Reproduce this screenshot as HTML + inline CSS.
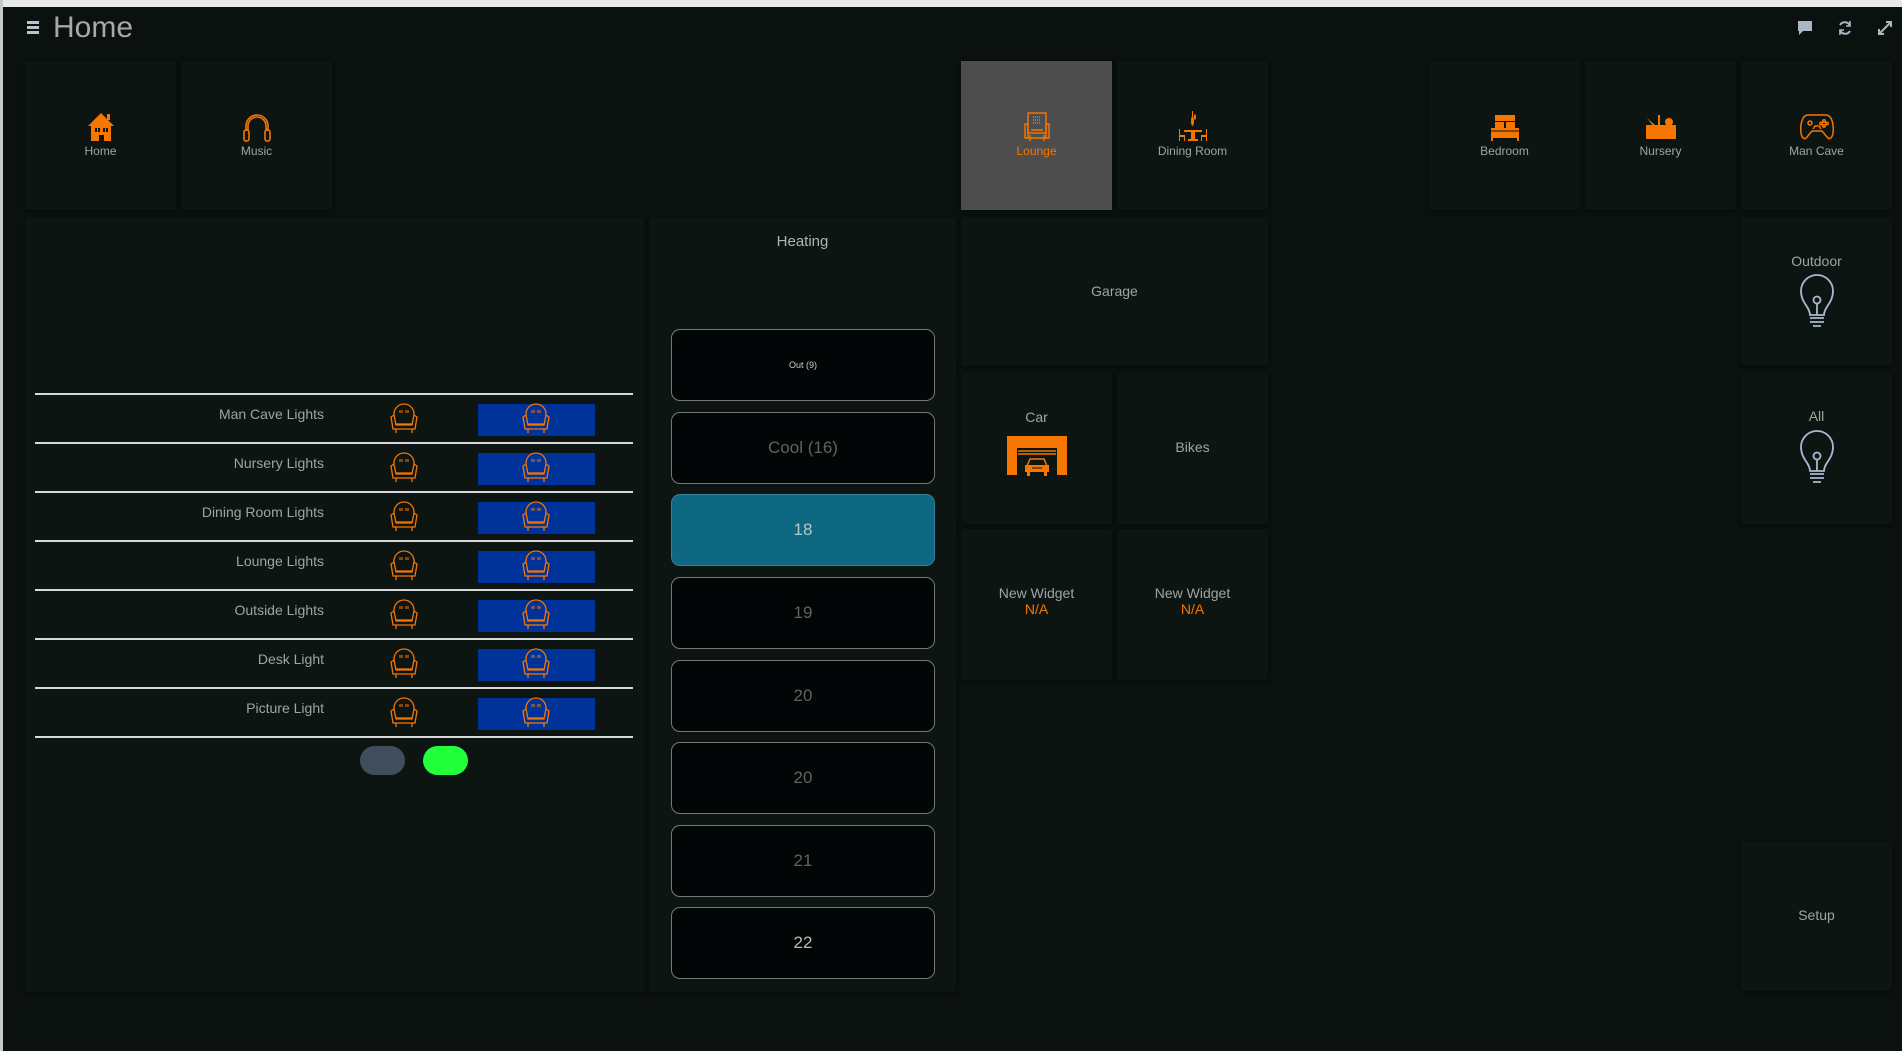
<!DOCTYPE html>
<html><head><meta charset="utf-8"><style>
*{margin:0;padding:0;box-sizing:border-box}
body{width:1902px;height:1051px;background:#0a110f;font-family:"Liberation Sans",sans-serif;position:relative;overflow:hidden;color:#a0a4a2}
#top{position:absolute;left:0;top:0;width:1902px;height:7px;background:#e8e8e6}
#left{position:absolute;left:0;top:0;width:3px;height:1051px;background:#c8c8c8}
.t{position:absolute;background:#0d1513;border-radius:3px;box-shadow:0 1px 3px rgba(0,0,0,.5)}
.lab{position:absolute;width:100%;text-align:center;font-size:12px;color:#a0a4a2}
.ic{position:absolute;left:50%;transform:translateX(-50%)}
.line{position:absolute;left:35px;width:598px;height:2px;background:#d8d8d8}
.rl{position:absolute;left:24px;width:300px;text-align:right;font-size:14px;color:#a0a4a2}
.blue{position:absolute;left:478px;width:117px;height:32px;background:#00339a}
.hb{position:absolute;left:671px;width:264px;height:72px;border:1px solid #777;border-radius:9px;background:#030606;text-align:center;line-height:70px;font-size:17px;color:#5f6462}
</style></head><body>
<div id="top"></div><div id="left"></div>
<div style="position:absolute;left:27px;top:21px;width:12px;">
<div style="height:3px;background:#b6c4d0;margin-bottom:2px"></div><div style="height:3px;background:#b6c4d0;margin-bottom:2px"></div><div style="height:3px;background:#b6c4d0"></div></div>
<div style="position:absolute;left:53px;top:11px;font-size:30px;color:#a8a8a8">Home</div>
<svg style="position:absolute;left:1797px;top:20px" width="16" height="16" viewBox="0 0 16 16"><path d="M1 1h14v10H6l-4 4v-4H1z" fill="#aab8c6"/></svg>
<svg style="position:absolute;left:1837px;top:20px" width="16" height="16" viewBox="0 0 16 16" fill="none" stroke="#aab8c6" stroke-width="2"><path d="M13 6A5.5 5.5 0 0 0 3 5"/><path d="M3 10a5.5 5.5 0 0 0 10 1"/><path d="M13 1v5H9M3 15v-5h4" stroke-width="1.6"/></svg>
<svg style="position:absolute;left:1877px;top:20px" width="16" height="16" viewBox="0 0 16 16" fill="none" stroke="#aab8c6" stroke-width="2"><path d="M2 14L14 2M9 2h5v5M2 9v5h5"/></svg>

<div class="t" style="left:25px;top:61px;width:151px;height:149px">
<svg class="ic" style="top:50px" width="30" height="30" viewBox="0 0 30 30"><path d="M2 15L15 2 28 15z M21 3h3v6h-3z" fill="#f77600"/><rect x="5" y="14" width="20" height="16" fill="#f77600"/><rect x="9" y="17" width="2" height="4" fill="#0d1513"/><rect x="12" y="17" width="2" height="4" fill="#0d1513"/><rect x="17" y="17" width="2" height="4" fill="#0d1513"/><rect x="20" y="17" width="2" height="4" fill="#0d1513"/><rect x="13" y="24" width="5" height="6" fill="#0d1513"/></svg>
<div class="lab" style="top:83px">Home</div></div>
<div class="t" style="left:181px;top:61px;width:151px;height:149px">
<svg class="ic" style="top:50px" width="32" height="32" viewBox="0 0 32 32" fill="none" stroke="#f77600" stroke-width="1.6"><path d="M5 20V15a11 11 0 0 1 22 0v5"/><path d="M7 20V15a9 9 0 0 1 18 0v5"/><rect x="3" y="19" width="5" height="11" rx="2"/><rect x="24" y="19" width="5" height="11" rx="2"/></svg>
<div class="lab" style="top:83px">Music</div></div>
<div class="t" style="left:961px;top:61px;width:151px;height:149px;background:#4d4d4d;border-radius:0">
<svg class="ic" style="top:50px" width="32" height="32" viewBox="0 0 32 32" fill="none" stroke="#f77600" stroke-width="1.4"><rect x="7" y="2" width="18" height="20"/><path d="M4 13h3v14h18V13h3v14H4zM9 24v6M23 24v6M10 19h12"/><path d="M12 6h8M12 9h8M12 12h8" stroke-dasharray="1 1"/></svg>
<div class="lab" style="top:83px;color:#f77600">Lounge</div></div>
<div class="t" style="left:1117px;top:61px;width:151px;height:149px">
<svg class="ic" style="top:50px" width="32" height="32" viewBox="0 0 32 32" fill="#f77600"><rect x="15" y="0" width="1" height="8"/><ellipse cx="15.5" cy="10" rx="1.5" ry="5"/><ellipse cx="18" cy="6" rx="1" ry="3"/><rect x="7" y="19" width="18" height="2"/><rect x="14" y="20" width="4" height="10"/><rect x="11" y="28" width="10" height="2"/><path d="M2 18h1v12h-1zM2 24h6v6h-1v-4h-4zM29 18h1v12h-1zM24 24h6v2h-5v4h-1z"/></svg>
<div class="lab" style="top:83px">Dining Room</div></div>
<div class="t" style="left:1429px;top:61px;width:151px;height:149px">
<svg class="ic" style="top:52px" width="32" height="28" viewBox="0 0 32 28" fill="#f77600"><rect x="6" y="2" width="20" height="6"/><rect x="6" y="9" width="9" height="6"/><rect x="17" y="9" width="9" height="6"/><rect x="2" y="15" width="28" height="8"/><rect x="2" y="23" width="28" height="2"/><path d="M2 25h2v3H2zM28 25h2v3h-2z"/><path d="M0 18h32" stroke="#0d1513" stroke-width="1"/></svg>
<div class="lab" style="top:83px">Bedroom</div></div>
<div class="t" style="left:1585px;top:61px;width:151px;height:149px">
<svg class="ic" style="top:54px" width="34" height="24" viewBox="0 0 34 24" fill="#f77600"><rect x="2" y="10" width="30" height="14" rx="1"/><rect x="14" y="0" width="2" height="10"/><circle cx="25" cy="7" r="4"/><path d="M3 3l8 7-2 1z"/></svg>
<div class="lab" style="top:83px">Nursery</div></div>
<div class="t" style="left:1741px;top:61px;width:151px;height:149px">
<svg class="ic" style="top:52px" width="34" height="28" viewBox="0 0 34 28" fill="none" stroke="#f77600" stroke-width="1.5"><path d="M8 2h18c6 0 8 10 7 18-1 6-4 7-6 4l-5-6H12l-5 6c-2 3-5 2-6-4C0 12 2 2 8 2z"/><circle cx="10" cy="10" r="2"/><circle cx="24" cy="8" r="1.2"/><circle cx="24" cy="13" r="1.2"/><circle cx="21" cy="10.5" r="1.2"/><circle cx="27" cy="10.5" r="1.2"/><path d="M13 16l2-3h4l2 3"/></svg>
<div class="lab" style="top:83px">Man Cave</div></div>

<div class="t" style="left:25px;top:217px;width:619px;height:775px"></div>
<div class="line" style="top:393px"></div>
<div class="line" style="top:442px"></div>
<div class="line" style="top:491px"></div>
<div class="line" style="top:540px"></div>
<div class="line" style="top:589px"></div>
<div class="line" style="top:638px"></div>
<div class="line" style="top:687px"></div>
<div class="line" style="top:736px"></div>
<svg width="0" height="0" style="position:absolute"><defs><g id="ch" fill="none" stroke="#f77600" stroke-width="1.3"><path d="M6 12V11a10 10 0 0 1 20 0v1"/><path d="M6 12l-3 2 2 12h22l2-12-3-2M6 12l2 10h16l2-10"/><path d="M8 21h16M8 26v4M24 26v4"/><path d="M12 7v3M14 7v3M18 7v3M20 7v3" stroke-width="1"/></g>
<g id="bulb" fill="none" stroke="#a8b8d0" stroke-width="1.8"><path d="M13 44C13 36 4 32 4 20A16 16 0 0 1 36 20C36 32 27 36 27 44Z"/><circle cx="20" cy="29" r="3.5"/><path d="M20 32.5V44M13 47h14M13 51h14M16 55h8"/></g></defs></svg>
<div class="rl" style="top:406px">Man Cave Lights</div>
<div class="rl" style="top:455px">Nursery Lights</div>
<div class="rl" style="top:504px">Dining Room Lights</div>
<div class="rl" style="top:553px">Lounge Lights</div>
<div class="rl" style="top:602px">Outside Lights</div>
<div class="rl" style="top:651px">Desk Light</div>
<div class="rl" style="top:700px">Picture Light</div>
<div class="blue" style="top:404px"></div><div class="blue" style="top:453px"></div><div class="blue" style="top:502px"></div><div class="blue" style="top:551px"></div><div class="blue" style="top:600px"></div><div class="blue" style="top:649px"></div><div class="blue" style="top:698px"></div>
<svg style="position:absolute;left:388px;top:403px" width="240" height="340">
<use href="#ch" x="0" y="0"/><use href="#ch" x="0" y="49"/><use href="#ch" x="0" y="98"/><use href="#ch" x="0" y="147"/><use href="#ch" x="0" y="196"/><use href="#ch" x="0" y="245"/><use href="#ch" x="0" y="294"/>
<use href="#ch" x="132" y="0"/><use href="#ch" x="132" y="49"/><use href="#ch" x="132" y="98"/><use href="#ch" x="132" y="147"/><use href="#ch" x="132" y="196"/><use href="#ch" x="132" y="245"/><use href="#ch" x="132" y="294"/>
</svg>
<div style="position:absolute;left:360px;top:746px;width:45px;height:29px;border-radius:15px;background:#414d5b"></div>
<div style="position:absolute;left:423px;top:746px;width:45px;height:29px;border-radius:15px;background:#22ff3b"></div>

<div class="t" style="left:649px;top:217px;width:307px;height:775px"></div>
<div style="position:absolute;left:649px;width:307px;top:233px;text-align:center;font-size:15px;color:#b0b4b2">Heating</div>
<div class="hb" style="top:329px;font-size:9px;color:#d0d0d0">Out (9)</div>
<div class="hb" style="top:412px">Cool (16)</div>
<div class="hb" style="top:494px;background:#0e6882;color:#b8c6cc;border-color:#3c7f94">18</div>
<div class="hb" style="top:577px">19</div>
<div class="hb" style="top:660px">20</div>
<div class="hb" style="top:742px">20</div>
<div class="hb" style="top:825px">21</div>
<div class="hb" style="top:907px;color:#b8bcba">22</div>

<div class="t" style="left:961px;top:217px;width:307px;height:149px"><div class="lab" style="top:66px;font-size:14px">Garage</div></div>
<div class="t" style="left:961px;top:373px;width:151px;height:151px"><div class="lab" style="top:36px;font-size:14px">Car</div>
<svg class="ic" style="top:63px" width="60" height="40" viewBox="0 0 60 40"><path d="M0 0h60v39h-10V12H10v27H0z" fill="#f77600"/><path d="M11 15h38M11 18h38" stroke="#f77600" stroke-width="1.5"/><path d="M20 30l3-7h14l3 7" fill="none" stroke="#f77600" stroke-width="1.5"/><rect x="18" y="29" width="24" height="7" fill="#f77600"/><rect x="20" y="36" width="3" height="4" fill="#f77600"/><rect x="37" y="36" width="3" height="4" fill="#f77600"/><path d="M25 32h10" stroke="#0d1513"/></svg></div>
<div class="t" style="left:1117px;top:373px;width:151px;height:151px"><div class="lab" style="top:66px;font-size:14px">Bikes</div></div>
<div class="t" style="left:961px;top:529px;width:151px;height:151px"><div class="lab" style="top:56px;font-size:14px">New Widget<br><span style="color:#f77600">N/A</span></div></div>
<div class="t" style="left:1117px;top:529px;width:151px;height:151px"><div class="lab" style="top:56px;font-size:14px">New Widget<br><span style="color:#f77600">N/A</span></div></div>

<div class="t" style="left:1741px;top:217px;width:151px;height:149px"><div class="lab" style="top:36px;font-size:14px">Outdoor</div><svg class="ic" style="top:54px" width="40" height="60"><use href="#bulb"/></svg></div>
<div class="t" style="left:1741px;top:373px;width:151px;height:151px"><div class="lab" style="top:35px;font-size:14px">All</div><svg class="ic" style="top:54px" width="40" height="60"><use href="#bulb"/></svg></div>
<div class="t" style="left:1741px;top:841px;width:151px;height:150px"><div class="lab" style="top:66px;font-size:14px">Setup</div></div>
</body></html>
